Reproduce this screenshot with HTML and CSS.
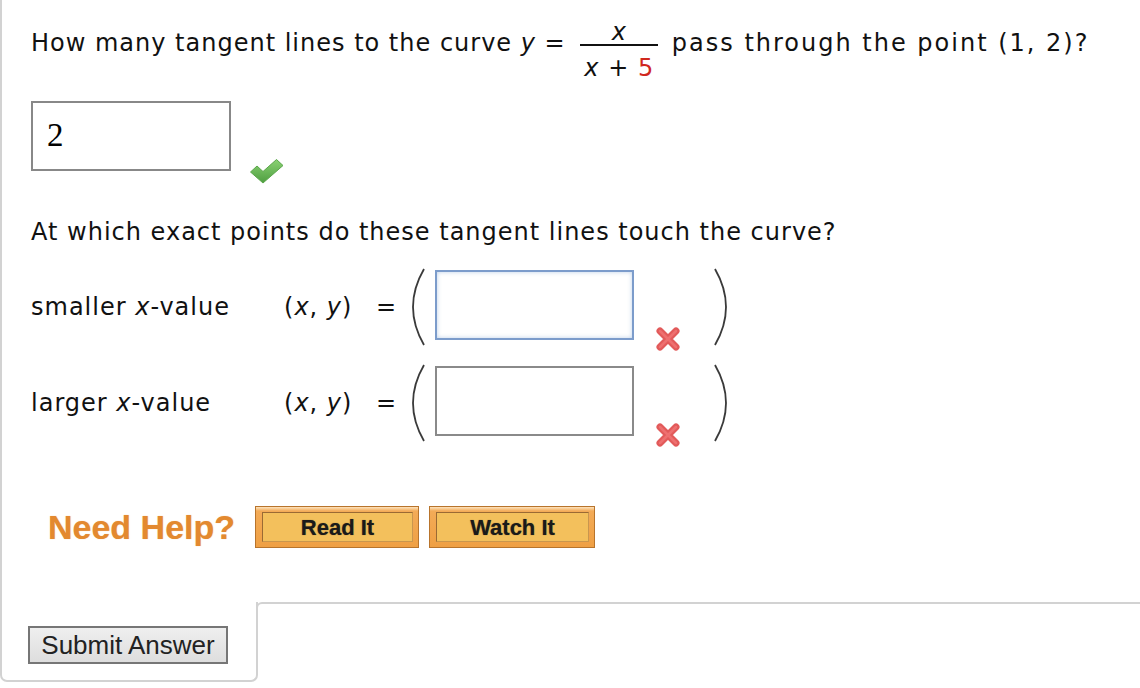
FILE: index.html
```html
<!DOCTYPE html>
<html>
<head>
<meta charset="utf-8">
<link rel="stylesheet" href="styles.css">
</head>
<body>
<div class="card">
  <div class="q1">
    <span class="txt">How many tangent lines to the curve <i>y</i> =&nbsp;</span>
    <span class="frac"><span class="num"><i>x</i></span><span class="den"><i>x</i> + <span class="red">5</span></span></span>
    <span class="txt wide">&nbsp;pass through the point (1, 2)?</span>
  </div>

  <div class="ans1">
    <div class="box1">2</div>
    <svg class="check" width="36" height="26" viewBox="0 0 36 26"><defs><linearGradient id="g" x1="0" y1="0" x2="0" y2="1"><stop offset="0" stop-color="#8ad273"/><stop offset="1" stop-color="#4f9e41"/></linearGradient></defs><path d="M1.5 14 L8 8 L14 13.5 L27.5 1.5 L34 7.5 L14 25 Z" fill="url(#g)" stroke="#5aa64a" stroke-width="1" stroke-linejoin="round"/></svg>
  </div>

  <div class="q2">At which exact points do these tangent lines touch the curve?</div>

  <div class="pt pt1">
    <span class="label">smaller <i>x</i>-value</span>
    <span class="xy">(<i>x</i>, <i>y</i>)</span>
    <span class="eq">=</span>
    <svg class="paren" width="27" height="78" viewBox="0 0 27 78"><path d="M16 1 Q-6 39 16 77" fill="none" stroke="#3a3a3a" stroke-width="1.8"/></svg>
    <span class="box focus"></span>
    <span class="xcell"><svg class="cross" width="26" height="26" viewBox="0 0 26 26"><path d="M5 5 L21 21 M21 5 L5 21" stroke="#e25a5a" stroke-width="7" stroke-linecap="round"/><path d="M5 5 L21 21 M21 5 L5 21" stroke="#ee7070" stroke-width="2.5" stroke-linecap="round"/></svg></span>
    <svg class="paren" width="20" height="78" viewBox="0 0 20 78"><path d="M2 1 Q24 39 2 77" fill="none" stroke="#3a3a3a" stroke-width="1.8"/></svg>
  </div>

  <div class="pt pt2">
    <span class="label">larger <i>x</i>-value</span>
    <span class="xy">(<i>x</i>, <i>y</i>)</span>
    <span class="eq">=</span>
    <svg class="paren" width="27" height="78" viewBox="0 0 27 78"><path d="M16 1 Q-6 39 16 77" fill="none" stroke="#3a3a3a" stroke-width="1.8"/></svg>
    <span class="box"></span>
    <span class="xcell"><svg class="cross" width="26" height="26" viewBox="0 0 26 26"><path d="M5 5 L21 21 M21 5 L5 21" stroke="#e25a5a" stroke-width="7" stroke-linecap="round"/><path d="M5 5 L21 21 M21 5 L5 21" stroke="#ee7070" stroke-width="2.5" stroke-linecap="round"/></svg></span>
    <svg class="paren" width="20" height="78" viewBox="0 0 20 78"><path d="M2 1 Q24 39 2 77" fill="none" stroke="#3a3a3a" stroke-width="1.8"/></svg>
  </div>

  <div class="help">
    <span class="needhelp">Need Help?</span>
    <span class="hbtn read"><span class="hin">Read It</span></span>
    <span class="hbtn watch"><span class="hin">Watch It</span></span>
  </div>
</div>
<div class="footer">
  <div class="fleft"><button class="submit">Submit Answer</button></div>
  <div class="fright"></div>
</div>
</body>
</html>
```

FILE: styles.css
```css
html, body { margin: 0; padding: 0; background: #fff; }
body { font-family: "DejaVu Sans", Verdana, sans-serif; font-size: 24px; letter-spacing: 1px; color: #111; width: 1140px; height: 688px; overflow: hidden; }

.card { border-left: 2px solid #d2d2d2; padding: 20px 0 54px 29px; }

.q1 { display: flex; align-items: flex-start; height: 60px; white-space: nowrap; }
.q1 .txt { line-height: 24px; margin-top: 11px; }
.q1 .wide { letter-spacing: 2px; }
.frac { display: inline-flex; flex-direction: column; align-items: stretch; margin: 0 4px 0 6px; }
.frac .num { display: block; text-align: center; line-height: 24px; height: 24px; border-bottom: 2px solid #111; }
.frac .den { display: block; text-align: center; line-height: 24px; padding: 10px 4px 0 4px; }
.red { color: #d0281e; }

.ans1 { display: flex; align-items: flex-end; margin-top: 21px; height: 70px; }
.box1 { box-sizing: border-box; width: 200px; height: 70px; border: 2px solid #888; padding-left: 14px; font-family: "Liberation Serif", "DejaVu Serif", serif; font-size: 33px; letter-spacing: 0; line-height: 64px; color: #000; }
.check { margin-left: 18px; margin-bottom: -13px; }

.q2 { margin-top: 48px; line-height: 26px; }

.pt { display: flex; align-items: center; height: 78px; }
.pt1 { margin-top: 23px; }
.pt2 { margin-top: 18px; }
.label { width: 253px; }
.xy { width: 92px; }
.eq { width: 32px; }
.box { box-sizing: border-box; width: 199px; height: 70px; border: 2px solid #8a8a8a; background: #fff; margin-bottom: 5px; }
.box.focus { border-color: #7c9ccb; box-shadow: inset 0 0 4px rgba(120,160,210,0.5); }
.xcell { width: 79px; align-self: flex-end; margin-bottom: -6px; }
.cross { display: block; margin-left: 21px; }

.help { display: flex; align-items: center; margin-top: 64px; height: 42px; letter-spacing: 0; }
.needhelp { margin-left: 17px; width: 207px; font-family: "Liberation Sans", Arial, sans-serif; font-weight: bold; font-size: 34px; color: #e3892f; text-shadow: 0 0 1px rgba(227,137,47,0.6); white-space: nowrap; }
.hbtn { box-sizing: border-box; display: flex; height: 42px; padding: 5px 5px 5px 6px; border: 1px solid #b8742c; background: linear-gradient(#fde3be 0, #f3ab57 4px, #efa044 100%); }
.read { width: 164px; }
.watch { width: 166px; margin-left: 10px; }
.hin { box-sizing: border-box; flex: 1; display: flex; align-items: center; justify-content: center; border: 1px solid #9a6a34; border-right-color: #c9964e; border-bottom-color: #c9964e; background: #f3c05c; font-family: "Liberation Sans", Arial, sans-serif; font-weight: bold; font-size: 22px; color: #1a1a1a; text-shadow: 0 0 1px rgba(0,0,0,0.5); padding-top: 2px; }

.footer { display: flex; }
.fleft { box-sizing: border-box; width: 258px; height: 80px; border-left: 2px solid #d2d2d2; border-right: 2px solid #d2d2d2; border-bottom: 2px solid #d2d2d2; border-radius: 0 0 7px 7px; padding: 24px 0 0 26px; }
.fright { flex: 1; height: 10px; margin-left: -2px; border-top: 2px solid #d2d2d2; border-left: 2px solid #d2d2d2; border-top-left-radius: 6px; }
.submit { box-sizing: border-box; width: 200px; height: 38px; border: 2px solid #767676; background: linear-gradient(#efefef, #dedede); font-family: "Liberation Sans", Arial, sans-serif; font-size: 26px; color: #222; padding: 0; margin: 0; }
```
